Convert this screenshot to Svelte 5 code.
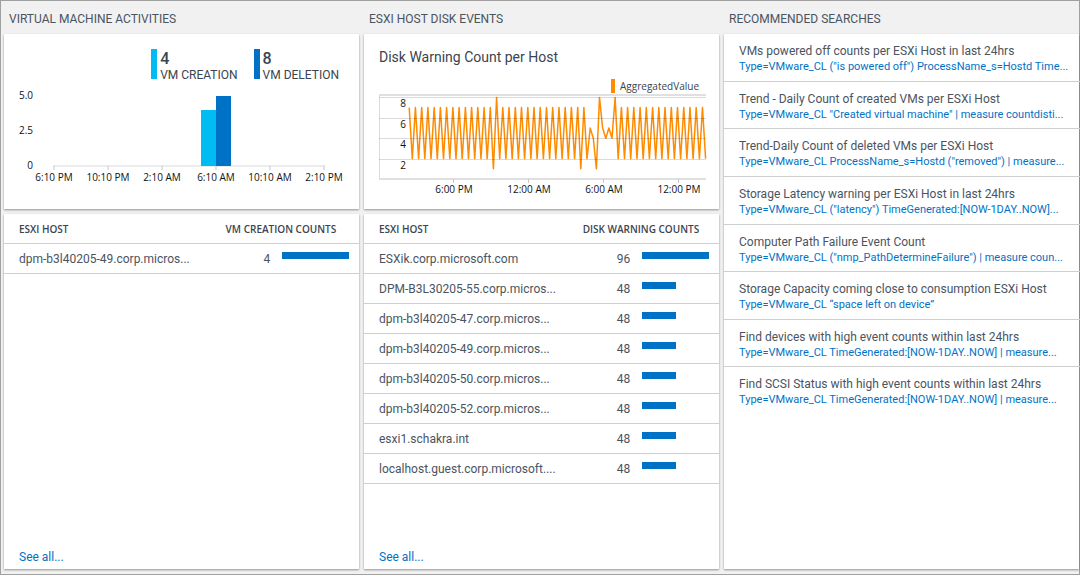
<script>
  const creations = [{ host: 'dpm-b3l40205-49.corp.micros...', count: 4 }];

  const warnings = [
    { host: 'ESXik.corp.microsoft.com', count: 96 },
    { host: 'DPM-B3L30205-55.corp.micros...', count: 48 },
    { host: 'dpm-b3l40205-47.corp.micros...', count: 48 },
    { host: 'dpm-b3l40205-49.corp.micros...', count: 48 },
    { host: 'dpm-b3l40205-50.corp.micros...', count: 48 },
    { host: 'dpm-b3l40205-52.corp.micros...', count: 48 },
    { host: 'esxi1.schakra.int', count: 48 },
    { host: 'localhost.guest.corp.microsoft....', count: 48 },
  ];

  const searches = [
    ['VMs powered off counts per ESXi Host in last 24hrs', 'Type=VMware_CL ("is powered off") ProcessName_s=Hostd Time...'],
    ['Trend - Daily Count of created VMs per ESXi Host', 'Type=VMware_CL "Created virtual machine" | measure countdisti...'],
    ['Trend-Daily Count of deleted VMs per ESXi Host', 'Type=VMware_CL ProcessName_s=Hostd ("removed") | measure...'],
    ['Storage Latency warning per ESXi Host in last 24hrs', 'Type=VMware_CL ("latency") TimeGenerated:[NOW-1DAY..NOW]...'],
    ['Computer Path Failure Event Count', 'Type=VMware_CL ("nmp_PathDetermineFailure") | measure coun...'],
    ['Storage Capacity coming close to consumption ESXi Host', 'Type=VMware_CL “space left on device”'],
    ['Find devices with high event counts within last 24hrs', 'Type=VMware_CL TimeGenerated:[NOW-1DAY..NOW] | measure...'],
    ['Find SCSI Status with high event counts within last 24hrs', 'Type=VMware_CL TimeGenerated:[NOW-1DAY..NOW] | measure...'],
  ];

  const barTimes = ['6:10 PM', '10:10 PM', '2:10 AM', '6:10 AM', '10:10 AM', '2:10 PM'];
  const lineTimes = ['6:00 PM', '12:00 AM', '6:00 AM', '12:00 PM'];

  // Warnings alternate between 7 and 2 every 15 minutes, apart from these samples.
  const irregular = { 27: 1, 28: 8, 55: 1, 58: 5, 59: 4, 60: 1, 61: 8, 62: 5, 63: 4, 64: 5, 65: 4, 66: 8 };
  const samples = Array.from({ length: 96 }, (_, i) => irregular[i] ?? (i % 2 ? 2 : 7));
  const y = (v) => 84 - v * 10.2;
  const line = samples.map((v, i) => `${(45.2 + i * 3.12).toFixed(1)},${y(v).toFixed(1)}`).join(' ');
</script>

{#snippet hostTable(label, rows)}
  {@const max = Math.max(...rows.map((r) => r.count))}
  <table>
    <colgroup><col class="c-host" /><col class="c-count" /><col /></colgroup>
    <thead>
      <tr><th class="host" scope="col">ESXI HOST</th><th class="counts" scope="col" colspan="2">{label}</th></tr>
    </thead>
    <tbody>
      {#each rows as row}
        <tr>
          <td class="host">{row.host}</td>
          <td class="count">{row.count}</td>
          <td class="meter"><div class="bar" style="width: {(row.count / max) * 100}%"></div></td>
        </tr>
      {/each}
    </tbody>
  </table>
{/snippet}

<main>
  <section>
    <h2>VIRTUAL MACHINE ACTIVITIES</h2>
    <div class="card chart">
      <div class="totals">
        <div class="total creation"><i></i><div><strong>4</strong><span>VM CREATION</span></div></div>
        <div class="total deletion"><i></i><div><strong>8</strong><span>VM DELETION</span></div></div>
      </div>
      <svg viewBox="0 4 355 126" role="img" aria-label="VM creation and deletion">
        <g class="end">
          <text x="29" y="20">5.0</text>
          <text x="29" y="55">2.5</text>
          <text x="29" y="90">0</text>
        </g>
        <rect x="50" y="86" width="270" height="2" fill="#eaecee" />
        {#each barTimes as time, i}
          <rect x={49 + i * 54} y="86" width="2" height="5" fill="#dfe3e8" />
          <text class="mid" x={50 + i * 54} y="102">{time}</text>
        {/each}
        <rect x="197" y="31" width="15" height="56" fill="#00bcf2" />
        <rect x="212" y="17" width="15" height="70" fill="#0072c6" />
      </svg>
    </div>
    <div class="card list">
      {@render hostTable('VM CREATION COUNTS', creations)}
      <a class="all" href="#creations">See all...</a>
    </div>
  </section>

  <section>
    <h2>ESXI HOST DISK EVENTS</h2>
    <div class="card chart">
      <h3>Disk Warning Count per Host</h3>
      <div class="legend"><i></i>AggregatedValue</div>
      <svg viewBox="0 0 355 114" role="img" aria-label="Disk warning count per host">
        <rect x="15" y="-1" width="327" height="2" fill="#e0e0e0" />
        <rect x="15" y="0" width="1" height="84" fill="#dcdcdc" />
        <rect x="15" y="83" width="327" height="2" fill="#e0e0e0" />
        {#each lineTimes as time, i}
          <rect x={89 + i * 75} y="84" width="1" height="4" fill="#c8c8c8" />
          <text class="mid" x={90 + i * 75} y="98">{time}</text>
        {/each}
        <polyline points={line} fill="none" stroke="#ff8c00" stroke-width="1.5" stroke-linejoin="round" />
        {#each [8, 6, 4, 2] as v}
          <rect x="15" y={Math.round(y(v))} width="327" height="1" fill="#000" opacity="0.14" />
          <text class="end" x="42" y={Math.round(y(v)) + 10}>{v}</text>
        {/each}
      </svg>
    </div>
    <div class="card list">
      {@render hostTable('DISK WARNING COUNTS', warnings)}
      <a class="all" href="#warnings">See all...</a>
    </div>
  </section>

  <section>
    <h2>RECOMMENDED SEARCHES</h2>
    <div class="card list">
      <ul>
        {#each searches as [title, query]}
          <li><p>{title}</p><a href="#search">{query}</a></li>
        {/each}
      </ul>
    </div>
  </section>
</main>

<style>
  :global(body) { margin: 0; }
  main {
    box-sizing: border-box;
    min-height: 100vh;
    display: grid;
    grid-template-columns: repeat(3, minmax(0, 1fr));
    gap: 5px;
    padding: 0 0 5px 3px;
    border: 1px solid #a0a0a0;
    background: #f1f1f1;
    color: #3b444f;
    font: 12px/16px Roboto, "Open Sans", sans-serif;
  }
  section { display: flex; flex-direction: column; }
  h2 {
    margin: 0;
    padding: 10px 5px 7px;
    font-size: 12px;
    line-height: 16px;
    font-weight: 400;
    color: #4a545f;
  }
  .card { background: #fff; box-shadow: 0 1px 2px rgba(0, 0, 0, 0.4); }
  .chart { margin-bottom: 5px; }
  .list { flex: 1; display: flex; flex-direction: column; }
  svg { display: block; width: 100%; height: auto; overflow: visible; }
  text { font-family: "Open Sans", sans-serif; font-size: 10px; fill: #111; }
  .end { text-anchor: end; }
  .mid { text-anchor: middle; }

  .totals { display: flex; justify-content: flex-end; gap: 16px; padding: 15px 20px 0 0; }
  .total { display: flex; align-items: flex-start; gap: 3px; }
  .total i { width: 6px; height: 30px; }
  .total div { display: flex; flex-direction: column; padding-top: 2px; }
  .creation i { background: #00bcf2; }
  .deletion i { background: #0072c6; }
  .total strong { font-size: 16px; font-weight: 500; }

  h3 { margin: 0; padding: 13px 15px 1px; font-size: 14px; line-height: 20px; font-weight: 400; }
  .legend {
    display: flex;
    justify-content: flex-end;
    gap: 5px;
    padding: 11px 20px 2px 0;
    font-family: "Open Sans", sans-serif;
    font-size: 10px;
    line-height: 14px;
  }
  .legend i { width: 4px; background: #ff8c00; }

  table { width: 100%; table-layout: fixed; border-collapse: separate; border-spacing: 0; }
  .c-host { width: 56%; }
  .c-count { width: 19%; }
  th, td { box-sizing: border-box; height: 30px; padding: 0; border-bottom: 1px solid #cfcfcf; font-weight: 400; }
  th { font-family: "Open Sans", sans-serif; font-size: 10px; font-weight: 600; }
  .host { padding-left: 15px; text-align: left; white-space: nowrap; }
  .counts { text-align: center; }
  .count { text-align: right; }
  .meter { padding: 8px 10px 0 12px; vertical-align: top; }
  .bar { height: 7px; background: #0072c6; }
  td { color: #4a545f; }
  a { color: #0072c6; text-decoration: none; }
  .all { margin-top: auto; padding: 0 15px 4px; }

  ul { display: grid; grid-auto-rows: 1fr; min-height: 381px; margin: 0; padding: 0; list-style: none; }
  li { padding: 9px 15px 0; border-bottom: 1px solid #cfcfcf; white-space: nowrap; }
  li:last-child { border-bottom: 0; }
  li p { margin: 0; color: #4a545f; }
  li a { display: block; font-size: 11px; line-height: 16px; }
</style>
